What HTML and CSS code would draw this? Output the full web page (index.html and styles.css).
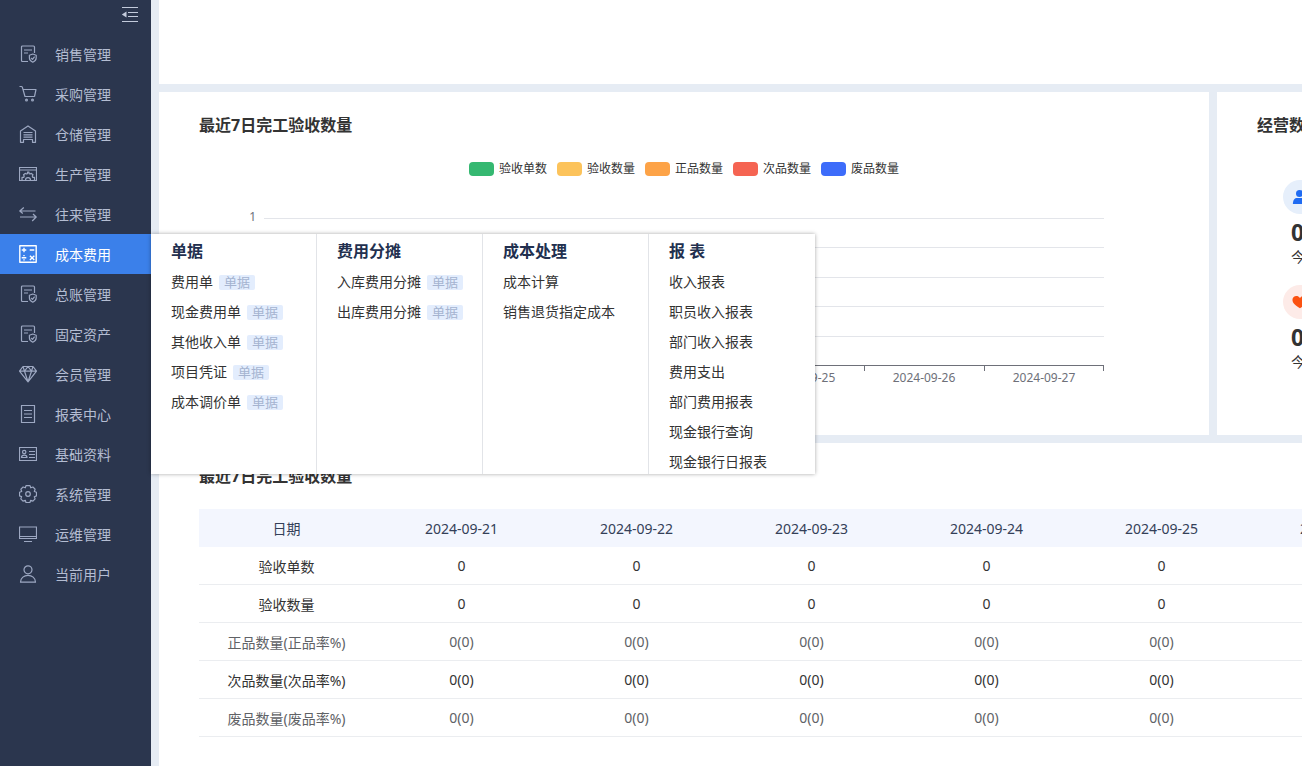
FILE: index.html
```html
<!DOCTYPE html>
<html lang="zh-CN">
<head>
<meta charset="utf-8">
<title>成本费用</title>
<link rel="stylesheet" href="styles.css">
</head>
<body>
<svg class="sprite" aria-hidden="true">
  <symbol id="i-doc" viewBox="0 0 18 18"><path d="M9 16.500H3.500a1 1 0 0 1-1-1V2a1 1 0 0 1 1-1h11a1 1 0 0 1 1 1v6M5 5h8M5 8h4"/><path d="M13.800 9l3.400 1.200v2.800c0 2.200-1.700 3.400-3.400 4.200-1.700-.8-3.400-2-3.400-4.200v-2.800zM12.200 13l1.300 1.400 2.100-2.700"/></symbol>
  <symbol id="i-cart" viewBox="0 0 18 18"><path d="M.5 1.500h1.800c.6 0 .9.300 1.100.9L6 11.500h9.500M3.800 4.500h13.200l-1.500 7"/><circle cx="7.500" cy="15" r=".9"/><circle cx="13.500" cy="15" r=".9"/></symbol>
  <symbol id="i-store" viewBox="0 0 18 18"><path d="M1.500 17.300V6L9 .9 16.500 6v11.300h-3v-2.800h-9v2.800zM4.500 7.500h9M4.500 9.800h9M4.500 12.200h9"/></symbol>
  <symbol id="i-make" viewBox="0 0 18 18"><path d="M.5 2.500h17v13H.5zM.5 5h17M3 15.300v-3h1.800l.4-1.300-.7-1.300 1.700-1.300 1.300.6 1-.4V7.200h1.500v1.400l1 .4 1.300-.6 1.700 1.300-.7 1.300.4 1.300h1.800v3M6.500 15.300c0-3.600 5-3.600 5 0"/></symbol>
  <symbol id="i-swap" viewBox="0 0 18 18"><path d="M16.500 6H.8M4.800 2.500L.8 6l3 2.500M1 12h16.200M14 9l3.200 3-4 4"/></symbol>
  <symbol id="i-calc" viewBox="0 0 18 18"><path stroke-width="1.400" d="M.8.800h16.400v16.400H.8zM2.700 5h4.600M5 2.700v4.600M10.700 5h4.600M2.700 12.800h4.600M10.900 10.700l4.400 4.400M15.300 10.700l-4.400 4.400M5 10v1.300M5 14.300v1.300"/></symbol>
  <symbol id="i-gem" viewBox="0 0 18 18"><path d="M4 1.500h10l3.500 4.700L9 16.800.5 6.200zM.5 6.200h17M4 1.500l1.500 4.700L9 16.800l3.500-10.600L14 1.500M5.500 6.200L9 1.500l3.500 4.700"/></symbol>
  <symbol id="i-report" viewBox="0 0 18 18"><path d="M2.500.5h13v17h-13zM5 5.500h8M5 9h8M5 12.500h8"/></symbol>
  <symbol id="i-card" viewBox="0 0 18 18"><path d="M.5 2.500h17v13H.5zM10 6.500h6M10 9.500h6M10 12.500h6M2.500 12.500c0-3.200 5.500-3.200 5.500 0z"/><circle cx="5.200" cy="7" r="1.700"/></symbol>
  <symbol id="i-gear" viewBox="0 0 18 18"><path d="M7 .6h4l.8 2.200 2.100-.8 2.200 2.200-.8 2.300 2.200.8v3.600l-2.200.8.8 2.200-2.200 2.200-2.200-.8-.8 2.200H7l-.7-2.200-2.300.8-2.200-2.200.8-2.300-2.100-.7V7.200l2.200-.7-.8-2.300L4.100 2l2.200.8z"/><circle cx="9" cy="9" r="2.300"/></symbol>
  <symbol id="i-screen" viewBox="0 0 18 18"><path d="M.5 2h17v11.500H.5zM.5 11.500h17M5 16.500h8"/></symbol>
  <symbol id="i-user" viewBox="0 0 18 18"><path d="M1.500 17.200c0-9 15-9 15 0z"/><circle cx="9" cy="4.800" r="4"/></symbol>
</svg>

<div class="app">
  <nav class="sidebar">
    <button class="collapse" type="button" aria-label="收起菜单">
      <svg width="18" height="18" viewBox="0 0 18 18"><path d="M1 2.500h16M7 7.500h10M7 11.500h10M1 16.500h16"/><path class="solid" d="M.8 9.500L5.500 6.500v6z"/></svg>
    </button>
    <ul class="menu">
      <li><a class="menu-link" href="#"><svg class="icon"><use href="#i-doc"/></svg>销售管理</a></li>
      <li><a class="menu-link" href="#"><svg class="icon"><use href="#i-cart"/></svg>采购管理</a></li>
      <li><a class="menu-link" href="#"><svg class="icon"><use href="#i-store"/></svg>仓储管理</a></li>
      <li><a class="menu-link" href="#"><svg class="icon"><use href="#i-make"/></svg>生产管理</a></li>
      <li><a class="menu-link" href="#"><svg class="icon"><use href="#i-swap"/></svg>往来管理</a></li>
      <li class="open">
        <a class="menu-link active" href="#"><svg class="icon"><use href="#i-calc"/></svg>成本费用</a>
        <div class="flyout">
          <section class="group">
            <h3>单据</h3>
            <ul>
              <li><a href="#">费用单</a><span class="tag">单据</span></li>
              <li><a href="#">现金费用单</a><span class="tag">单据</span></li>
              <li><a href="#">其他收入单</a><span class="tag">单据</span></li>
              <li><a href="#">项目凭证</a><span class="tag">单据</span></li>
              <li><a href="#">成本调价单</a><span class="tag">单据</span></li>
            </ul>
          </section>
          <section class="group">
            <h3>费用分摊</h3>
            <ul>
              <li><a href="#">入库费用分摊</a><span class="tag">单据</span></li>
              <li><a href="#">出库费用分摊</a><span class="tag">单据</span></li>
            </ul>
          </section>
          <section class="group">
            <h3>成本处理</h3>
            <ul>
              <li><a href="#">成本计算</a></li>
              <li><a href="#">销售退货指定成本</a></li>
            </ul>
          </section>
          <section class="group">
            <h3>报 表</h3>
            <ul>
              <li><a href="#">收入报表</a></li>
              <li><a href="#">职员收入报表</a></li>
              <li><a href="#">部门收入报表</a></li>
              <li><a href="#">费用支出</a></li>
              <li><a href="#">部门费用报表</a></li>
              <li><a href="#">现金银行查询</a></li>
              <li><a href="#">现金银行日报表</a></li>
            </ul>
          </section>
        </div>
      </li>
      <li><a class="menu-link" href="#"><svg class="icon"><use href="#i-doc"/></svg>总账管理</a></li>
      <li><a class="menu-link" href="#"><svg class="icon"><use href="#i-doc"/></svg>固定资产</a></li>
      <li><a class="menu-link" href="#"><svg class="icon"><use href="#i-gem"/></svg>会员管理</a></li>
      <li><a class="menu-link" href="#"><svg class="icon"><use href="#i-report"/></svg>报表中心</a></li>
      <li><a class="menu-link" href="#"><svg class="icon"><use href="#i-card"/></svg>基础资料</a></li>
      <li><a class="menu-link" href="#"><svg class="icon"><use href="#i-gear"/></svg>系统管理</a></li>
      <li><a class="menu-link" href="#"><svg class="icon"><use href="#i-screen"/></svg>运维管理</a></li>
      <li><a class="menu-link" href="#"><svg class="icon"><use href="#i-user"/></svg>当前用户</a></li>
    </ul>
  </nav>

  <main class="content">
    <div class="dashboard">
      <section class="card blank"></section>
      <div class="row">
        <section class="card">
          <h2>最近7日完工验收数量</h2>
          <ul class="legend">
            <li><span class="swatch green"></span>验收单数</li>
            <li><span class="swatch yellow"></span>验收数量</li>
            <li><span class="swatch orange"></span>正品数量</li>
            <li><span class="swatch red"></span>次品数量</li>
            <li><span class="swatch blue"></span>废品数量</li>
          </ul>
          <div class="chart">
            <div class="y-axis"><span>1</span></div>
            <div class="plot">
              <div class="lines"><i></i><i></i><i></i><i></i><i></i></div>
              <div class="x-axis">
                <span>2024-09-21</span><span>2024-09-22</span><span>2024-09-23</span><span>2024-09-24</span><span>2024-09-25</span><span>2024-09-26</span><span>2024-09-27</span>
              </div>
            </div>
          </div>
        </section>
        <section class="card">
          <h2>经营数据</h2>
          <div class="stats">
            <div class="stat">
              <span class="badge badge-blue"><svg width="16" height="16" viewBox="0 0 18 18"><circle cx="8.500" cy="5" r="4"/><path d="M1 17c0-5 2-7 5-7h6c3 0 5 2 5 7z"/></svg></span>
              <strong>0</strong><span class="caption">今日</span>
            </div>
            <div class="stat">
              <span class="badge badge-red"><svg width="16" height="16" viewBox="0 0 18 18"><path d="M9 16C4 13 .5 10.500.5 6.500.5 2 6.500.5 9 4.500 11.500.5 17.500 2 17.500 6.500 17.500 10.500 14 13 9 16z"/></svg></span>
              <strong>0</strong><span class="caption">今日</span>
            </div>
          </div>
        </section>
      </div>
      <section class="card">
        <h2>最近7日完工验收数量</h2>
        <table>
          <thead><tr><th>日期</th><th>2024-09-21</th><th>2024-09-22</th><th>2024-09-23</th><th>2024-09-24</th><th>2024-09-25</th><th>2024-09-26</th><th>2024-09-27</th></tr></thead>
          <tbody>
            <tr><td>验收单数</td><td>0</td><td>0</td><td>0</td><td>0</td><td>0</td><td>0</td><td>0</td></tr>
            <tr><td>验收数量</td><td>0</td><td>0</td><td>0</td><td>0</td><td>0</td><td>0</td><td>0</td></tr>
            <tr class="soft"><td>正品数量(正品率%)</td><td>0(0)</td><td>0(0)</td><td>0(0)</td><td>0(0)</td><td>0(0)</td><td>0(0)</td><td>0(0)</td></tr>
            <tr><td>次品数量(次品率%)</td><td>0(0)</td><td>0(0)</td><td>0(0)</td><td>0(0)</td><td>0(0)</td><td>0(0)</td><td>0(0)</td></tr>
            <tr class="soft"><td>废品数量(废品率%)</td><td>0(0)</td><td>0(0)</td><td>0(0)</td><td>0(0)</td><td>0(0)</td><td>0(0)</td><td>0(0)</td></tr>
          </tbody>
        </table>
      </section>
    </div>
  </main>
</div>
</body>
</html>
```
FILE: styles.css
```css
* { box-sizing: border-box; }

body {
  margin: 0;
  font-family: "Noto Sans", "Noto Sans CJK SC", sans-serif;
  font-size: 14px;
  color: #333;
  overflow: hidden;
}

ul { margin: 0; padding: 0; list-style: none; }
a { color: inherit; text-decoration: none; }
.sprite { display: none; }

.app { display: flex; height: 100vh; }

/* Sidebar */
.sidebar {
  position: relative;
  z-index: 2;
  flex: none;
  width: 151px;
  background: #2b364e;
}
.collapse {
  display: flex;
  justify-content: flex-end;
  width: 100%;
  height: 34px;
  padding: 5px 12px 0 0;
  border: 0;
  background: none;
}
.collapse svg { fill: none; stroke: #c3cbdc; }
.collapse .solid { fill: #c3cbdc; stroke: none; }

.open { position: relative; }
.menu-link {
  display: flex;
  align-items: center;
  gap: 18px;
  height: 40px;
  padding-left: 19px;
  color: #b4bdd2;
}
.menu-link.active { background: #3b80ea; color: #fff; }
.icon {
  width: 18px;
  height: 18px;
  fill: none;
  stroke: #9da8c2;
  stroke-width: 1.2;
  stroke-linejoin: round;
}
.active .icon { stroke: #fff; }

/* Second-level menu */
.flyout {
  position: absolute;
  top: 0;
  left: 100%;
  display: flex;
  background: #fff;
  box-shadow: 0 0 4px rgba(0, 0, 0, 0.35);
}
.group {
  width: 166px;
  padding: 6px 0 1px 20px;
  border-right: 1px solid #e2e4e8;
  line-height: 22px;
  white-space: nowrap;
}
.group:last-child { border-right: 0; }
.group h3 { margin: 0 0 9px; font-size: 16px; color: #22304f; }
.group ul { display: grid; gap: 8px; }
.group li { display: flex; align-items: center; gap: 6px; }
.tag {
  padding: 0 5px;
  border-radius: 2px;
  background: #e3edfd;
  color: #a5b4d0;
  font-size: 13px;
  line-height: 15px;
}

/* Dashboard */
.content { flex: 1; min-width: 0; overflow: hidden; background: #e6ecf4; }
.dashboard {
  display: flex;
  flex-direction: column;
  gap: 8px;
  min-width: 1488px;
  height: 100%;
  padding-left: 8px;
}
.row { display: grid; grid-template-columns: minmax(0, 1fr) 422px; gap: 8px; }
.card { padding: 21px 40px 0; background: #fff; }
.card:last-child { flex: 1; }
.blank { flex: none; height: 84px; }
h2 { margin: 0; font-size: 16px; line-height: 24px; color: #333; }

.legend {
  display: flex;
  justify-content: center;
  gap: 10px;
  margin-top: 22px;
  font-size: 12px;
  line-height: 20px;
}
.legend li { display: flex; align-items: center; gap: 5px; }
.swatch { width: 25px; height: 14px; border-radius: 4px; }
.green { background: #35b871; }
.yellow { background: #fcc35b; }
.orange { background: #fda347; }
.red { background: #f56452; }
.blue { background: #3d6cfa; }

.chart { display: flex; padding: 39px 65px 50px 50px; }
.y-axis {
  flex: none;
  width: 15px;
  margin-top: -10px;
  padding-right: 8px;
  text-align: right;
  font-size: 12px;
  line-height: 18px;
  color: #6e7079;
}
.plot { flex: 1; }
.lines { display: grid; grid-template-rows: repeat(5, 1fr); height: 147px; }
.lines i { border-top: 1px solid #e3e5ea; }
.x-axis {
  display: grid;
  grid-template-columns: repeat(7, 1fr);
  border-top: 1px solid #6e7079;
  font-size: 12px;
  line-height: 14px;
  text-align: center;
  color: #6e7079;
}
.x-axis span { padding-top: 5px; background: linear-gradient(#6e7079, #6e7079) no-repeat 0 0 / 1px 5px; }
.x-axis span:last-child {
  background:
    linear-gradient(#6e7079, #6e7079) no-repeat 0 0 / 1px 5px,
    linear-gradient(#6e7079, #6e7079) no-repeat 100% 0 / 1px 5px;
}

.stats { display: grid; gap: 8px; padding: 43px 0 0 26px; }
.stat { display: flex; flex-direction: column; height: 97px; }
.badge {
  display: grid;
  place-items: center;
  width: 34px;
  height: 34px;
  border-radius: 50%;
}
.badge-blue { background: #e6effb; fill: #1f6bf2; }
.badge-red { background: #fdebe8; fill: #fb5211; }
.stat strong { padding: 4px 0 0 8px; font-size: 23px; line-height: 28px; }
.caption { padding-left: 8px; line-height: 22px; }

table {
  width: 100%;
  margin-top: 21px;
  border-collapse: separate;
  border-spacing: 0;
  table-layout: fixed;
  text-align: center;
}
th, td { height: 38px; padding: 0; }
th { background: #f3f6fe; color: #333f58; font-weight: 400; }
td { border-bottom: 1px solid #ebedf0; }
.soft { color: #606266; }
```
